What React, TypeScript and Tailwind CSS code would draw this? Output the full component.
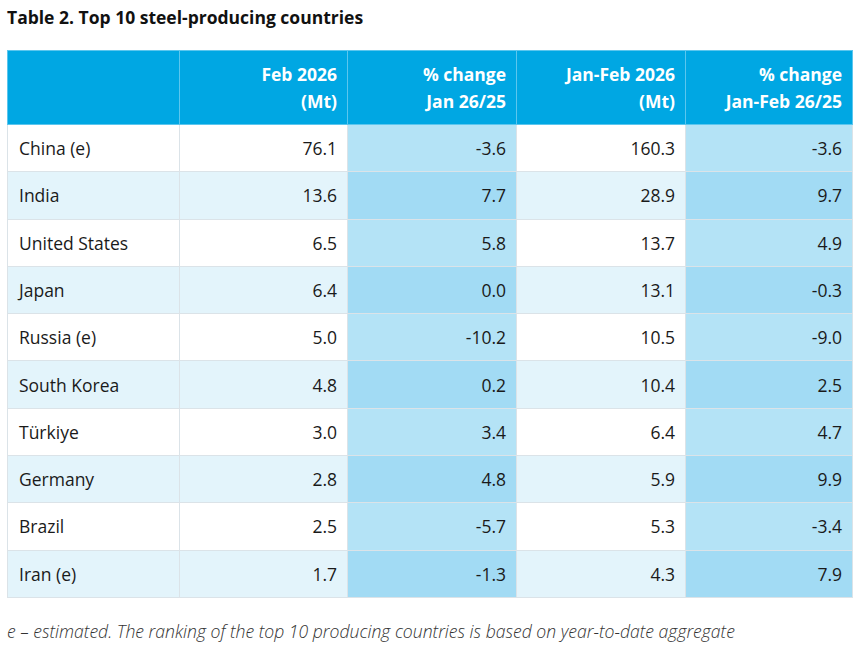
const rows: [string, string, string, string, string][] = [
  ["China (e)", "76.1", "-3.6", "160.3", "-3.6"],
  ["India", "13.6", "7.7", "28.9", "9.7"],
  ["United States", "6.5", "5.8", "13.7", "4.9"],
  ["Japan", "6.4", "0.0", "13.1", "-0.3"],
  ["Russia (e)", "5.0", "-10.2", "10.5", "-9.0"],
  ["South Korea", "4.8", "0.2", "10.4", "2.5"],
  ["Türkiye", "3.0", "3.4", "6.4", "4.7"],
  ["Germany", "2.8", "4.8", "5.9", "9.9"],
  ["Brazil", "2.5", "-5.7", "5.3", "-3.4"],
  ["Iran (e)", "1.7", "-1.3", "4.3", "7.9"],
];

const headers = [
  ["", ""],
  ["Feb 2026", "(Mt)"],
  ["% change", "Jan 26/25"],
  ["Jan-Feb 2026", "(Mt)"],
  ["% change", "Jan-Feb 26/25"],
];

export default function App() {
  return (
    <div className="bg-white min-h-screen px-[7px] pt-[5px] text-[#1a1a1a] font-['Open_Sans',sans-serif]">
      <h2 className="text-[17.5px] font-bold leading-[24px] text-[#111]">
        Table 2. Top 10 steel-producing countries
      </h2>
      <table className="mt-[21px] w-[845px] border-collapse table-fixed text-[17.5px]">
        <colgroup>
          <col className="w-[172px]" />
          <col className="w-[168px]" />
          <col className="w-[169px]" />
          <col className="w-[169px]" />
          <col className="w-[167px]" />
        </colgroup>
        <thead>
          <tr className="bg-[#00a7e3] h-[74px]">
            {headers.map((h, i) => (
              <th
                key={i}
                className="border border-[#5cc6ee] px-[10px] text-right font-bold text-white leading-[27px] align-middle"
              >
                {h[0] && (
                  <>
                    {h[0]}
                    <br />
                    {h[1]}
                  </>
                )}
              </th>
            ))}
          </tr>
        </thead>
        <tbody>
          {rows.map((r, ri) => {
            const even = ri % 2 === 1;
            return (
              <tr key={r[0]} className="h-[47.3px]">
                {r.map((c, ci) => {
                  const pct = ci === 2 || ci === 4;
                  const bg = pct
                    ? even
                      ? "bg-[#a2dbf4]"
                      : "bg-[#b4e3f6]"
                    : even
                      ? "bg-[#e3f4fb]"
                      : "bg-white";
                  return (
                    <td
                      key={ci}
                      className={`${bg} border border-[#dbe3e8] px-[10px] ${ci === 0 ? "text-left pl-[11px]" : "text-right"}`}
                    >
                      {c}
                    </td>
                  );
                })}
              </tr>
            );
          })}
        </tbody>
      </table>
      <p className="mt-[21px] italic font-light text-[17.6px] text-[#333] leading-[24px]">
        e – estimated. The ranking of the top 10 producing countries is based on year-to-date aggregate
      </p>
    </div>
  );
}
